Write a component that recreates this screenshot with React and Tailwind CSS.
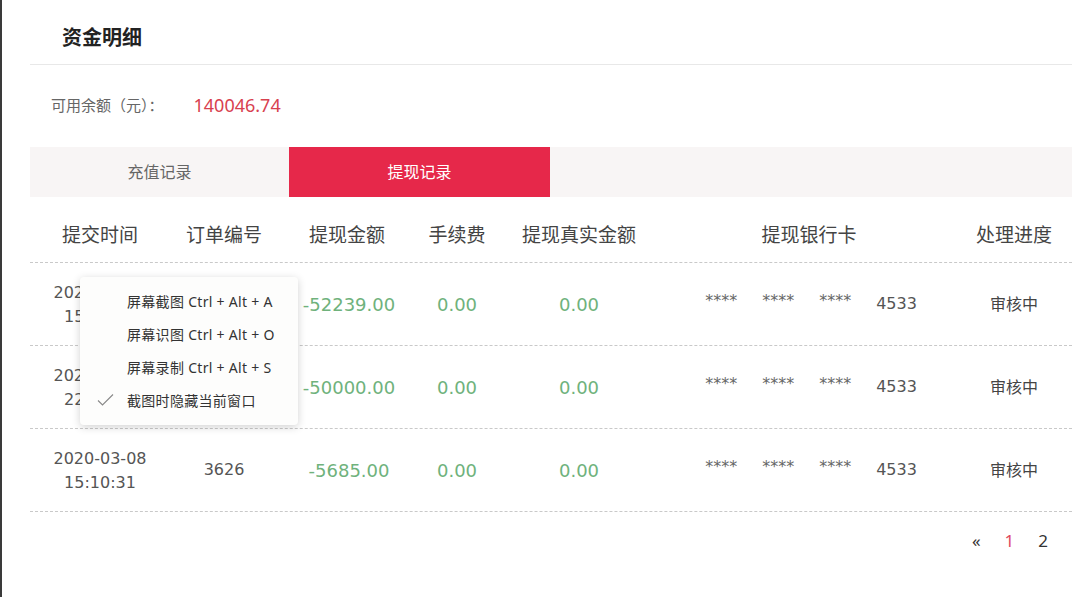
import React from "react";

const F = { fontFamily: '"Noto Sans", "Noto Sans CJK SC", sans-serif' };
const N = { fontFamily: '"DejaVu Sans", "Noto Sans CJK SC", sans-serif' };

const cols = [
  "w-[140px]",
  "w-[108px]",
  "w-[138px]",
  "w-[82px]",
  "w-[162px]",
  "w-[298px]",
  "w-[112px]",
];

const headers = ["提交时间", "订单编号", "提现金额", "手续费", "提现真实金额", "提现银行卡", "处理进度"];

const rows = [
  { d: "2020-03-09", t: "15:42:18", id: "3658", amt: "-52239.00" },
  { d: "2020-03-08", t: "22:05:47", id: "3641", amt: "-50000.00" },
  { d: "2020-03-08", t: "15:10:31", id: "3626", amt: "-5685.00" },
];

function Row({ r }) {
  return (
    <div className="flex h-[83px] items-center border-b border-dashed border-[#c9c9c9]" style={N}>
      <div className={`${cols[0]} flex flex-col items-center pt-[1px] text-[16px] leading-[24px] text-[#555]`}>
        <span>{r.d}</span>
        <span>{r.t}</span>
      </div>
      <div className={`${cols[1]} text-center text-[16px] text-[#555]`}>{r.id}</div>
      <div className={`${cols[2]} pl-[4px] text-center text-[18px] text-[#6fb27c]`}>{r.amt}</div>
      <div className={`${cols[3]} text-center text-[18px] text-[#6fb27c]`}>0.00</div>
      <div className={`${cols[4]} text-center text-[18px] text-[#6fb27c]`}>0.00</div>
      <div className={`${cols[5]} flex items-center justify-center gap-[25px] pl-[4px] text-[#666]`}>
        <span className="relative top-[-3px] text-[16px]">****</span>
        <span className="relative top-[-3px] text-[16px]">****</span>
        <span className="relative top-[-3px] text-[16px]">****</span>
        <span className="text-[16px] text-[#555]">4533</span>
      </div>
      <div className={`${cols[6]} text-center text-[16px] text-[#444]`} style={F}>审核中</div>
    </div>
  );
}

export default function App() {
  return (
    <div className="relative h-[597px] w-[1080px] overflow-hidden bg-white" style={F}>
      <div className="flex h-full">
        <div className="w-[2px] bg-[#3a3a3a]" />
        <div className="ml-[28px] w-[1042px]">
          <div className="flex h-[65px] items-center border-b border-[#e8e8e8] pl-[32px] pt-[12px]">
            <span className="text-[20px] font-bold text-[#222]">资金明细</span>
          </div>
          <div className="flex h-[82px] items-center pb-[2px] pl-[21px]">
            <span className="text-[15px] text-[#666]">可用余额（元）：</span>
            <span className="ml-[30px] text-[18px] text-[#d8414f]">140046.74</span>
          </div>
          <div className="flex h-[50px] bg-[#f8f5f5]">
            <div className="flex w-[259px] items-center justify-center text-[16px] text-[#666]">充值记录</div>
            <div className="flex w-[261px] items-center justify-center bg-[#e6284a] text-[16px] text-white">提现记录</div>
          </div>
          <div className="flex h-[66px] items-center border-b border-dashed border-[#c9c9c9] pt-[12px]">
            {headers.map((h, i) => (
              <div key={h} className={`${cols[i]} text-center text-[19px] text-[#444]`}>
                {h}
              </div>
            ))}
          </div>
          {rows.map((r, i) => (
            <Row key={i} r={r} />
          ))}
          <div className="flex h-[58px] items-center justify-end gap-[24px] pr-[24px] text-[17px]">
            <span className="text-[#333]">«</span>
            <span className="text-[#e04a5e]">1</span>
            <span className="text-[#333]">2</span>
          </div>
        </div>
      </div>

      <div className="absolute left-[80px] top-[277px] w-[218px] rounded-[4px] bg-[#fdfdfc] py-[8px] shadow-[0_2px_8px_rgba(0,0,0,0.18)]">
        {["屏幕截图 Ctrl + Alt + A", "屏幕识图 Ctrl + Alt + O", "屏幕录制 Ctrl + Alt + S", "截图时隐藏当前窗口"].map((t, i) => (
          <div key={t} className="relative flex h-[33px] items-center pl-[47px] text-[14px] tracking-[0.3px] text-[#333]">
            {i === 3 && (
              <svg className="absolute left-[17px] top-[9px]" width="17" height="14" viewBox="0 0 17 14" fill="none">
                <path d="M1 7.5 L5.5 12 L16 1.5" stroke="#888" strokeWidth="1.1" />
              </svg>
            )}
            {t}
          </div>
        ))}
      </div>
    </div>
  );
}
